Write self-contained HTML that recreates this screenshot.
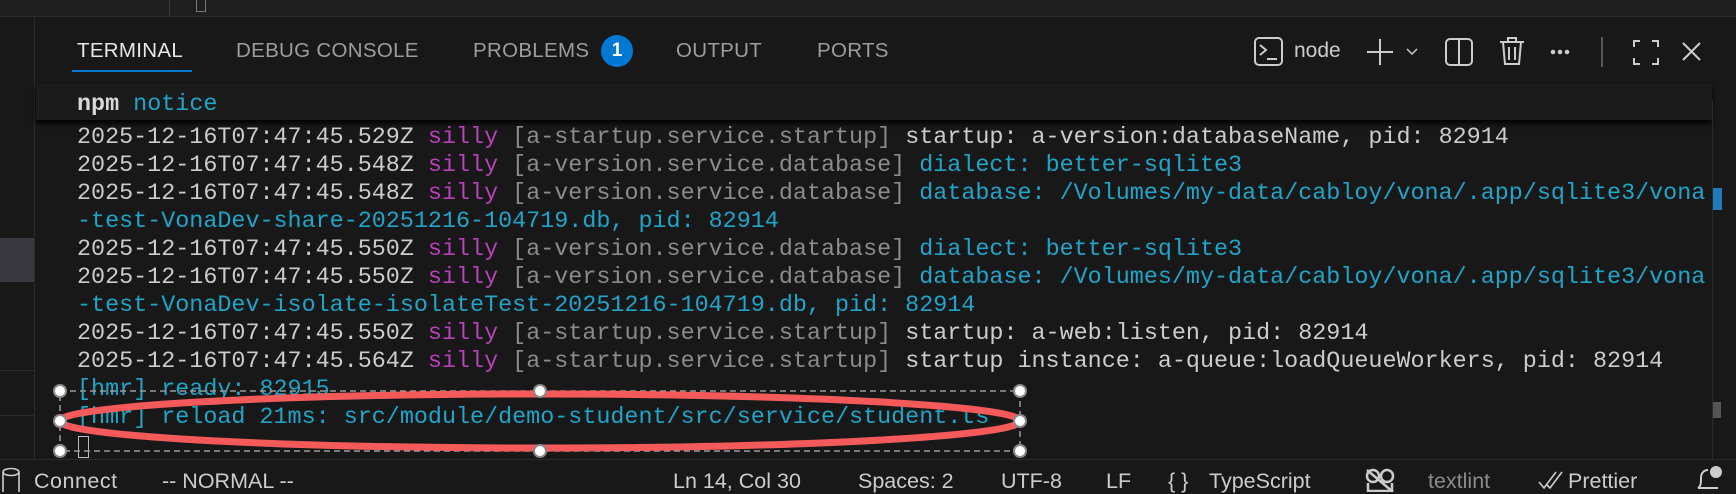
<!DOCTYPE html>
<html><head><meta charset="utf-8"><style>
*{margin:0;padding:0;box-sizing:border-box}
body{width:1736px;height:492px;overflow:hidden;background:#181818;position:relative;font-family:"Liberation Sans",sans-serif}
.a{position:absolute;white-space:pre}
.tab{position:absolute;top:39px;font-size:20.5px;color:#9d9d9d;letter-spacing:0.3px}
.mono{font-family:"Liberation Mono",monospace;font-size:23.4px;line-height:28px;color:#cccccc}
.m{color:#bc3fbc}.g{color:#8b8b8b}.c{color:#1ea5c9}
.st{position:absolute;top:469px;font-size:21.5px;color:#cccccc;white-space:pre}
</style></head><body>
<div class="a" style="left:0;top:0;width:1736px;height:17px;background:#1f1f1f;border-bottom:1px solid #2b2b2b"></div>
<div class="a" style="left:169px;top:0;width:1px;height:16px;background:#3a3a3a"></div>
<div class="a" style="left:196px;top:0;width:10px;height:12px;border:1px solid #777;border-top:none"></div>
<div class="a" style="left:0;top:17px;width:35px;height:442px;background:#181818;border-right:1px solid #2b2b2b"></div>
<div class="a" style="left:0;top:238px;width:34px;height:44px;background:#37373d"></div>
<div class="a" style="left:0;top:370px;width:34px;height:1px;background:#2b2b2b"></div>
<div class="a" style="left:0;top:415px;width:34px;height:1px;background:#2b2b2b"></div>
<div class="tab" style="left:77px;color:#e7e7e7">TERMINAL</div>
<div class="a" style="left:72px;top:70px;width:120px;height:2px;background:#0078d4"></div>
<div class="tab" style="left:236px">DEBUG CONSOLE</div>
<div class="tab" style="left:473px">PROBLEMS</div>
<div class="a" style="left:601px;top:35px;width:32px;height:32px;border-radius:50%;background:#0078d4;color:#fff;font-size:19px;text-align:center;line-height:32px;font-weight:bold">1</div>
<div class="tab" style="left:676px">OUTPUT</div>
<div class="tab" style="left:817px">PORTS</div>
<svg class="a" style="left:1250px;top:31px" width="480" height="42" viewBox="0 0 480 42" fill="none" stroke="#cccccc" stroke-width="2">
 <rect x="5" y="7" width="27" height="27" rx="4"/>
 <path d="M10 14l6 5-6 5M17 28h10"/>
 <path d="M130 8v26M117 21h26"/>
 <path d="M157 18l5 5 5-5" stroke-width="1.5"/>
 <rect x="196" y="8" width="26" height="26" rx="4"/><path d="M209 8v26"/>
 <path d="M250 11h24M258 11V7h8v4M253 11l2 22h14l2-22M259 16v13M265 16v13"/>
 <circle cx="303" cy="21" r="1.3" fill="#ccc"/><circle cx="310" cy="21" r="1.3" fill="#ccc"/><circle cx="317" cy="21" r="1.3" fill="#ccc"/>
 <path d="M352 6v30" stroke="#555"/>
 <path d="M384 16v-6h6M402 10h6v6M408 27v6h-6M390 33h-6v-6"/>
 <path d="M433 12l17 17M450 12l-17 17"/>
</svg>
<div class="a" style="left:1294px;top:39px;font-size:21px;color:#cccccc">node</div>
<div class="a" style="left:36px;top:84px;width:1676px;height:36px;background:#1b1b1b;box-shadow:0 3px 5px #000"></div>
<div class="a mono" style="left:77px;top:91px"><b style="color:#d8d8d8">npm</b> <span class="c">notice</span></div>
<div class="a" style="left:1712px;top:100px;width:1px;height:359px;background:#2b2b2b"></div>
<div class="a" style="left:1713px;top:188px;width:9px;height:22px;background:#1e7ab8"></div>
<div class="a" style="left:1713px;top:402px;width:8px;height:16px;background:#555"></div>
<div class="a mono" style="left:77px;top:124px">2025-12-16T07:47:45.529Z <span class="m">silly</span> <span class="g">[a-startup.service.startup]</span> startup: a-version:databaseName, pid: 82914
2025-12-16T07:47:45.548Z <span class="m">silly</span> <span class="g">[a-version.service.database]</span> <span class="c">dialect: better-sqlite3</span>
2025-12-16T07:47:45.548Z <span class="m">silly</span> <span class="g">[a-version.service.database]</span> <span class="c">database: /Volumes/my-data/cabloy/vona/.app/sqlite3/vona</span>
<span class="c">-test-VonaDev-share-20251216-104719.db, pid: 82914</span>
2025-12-16T07:47:45.550Z <span class="m">silly</span> <span class="g">[a-version.service.database]</span> <span class="c">dialect: better-sqlite3</span>
2025-12-16T07:47:45.550Z <span class="m">silly</span> <span class="g">[a-version.service.database]</span> <span class="c">database: /Volumes/my-data/cabloy/vona/.app/sqlite3/vona</span>
<span class="c">-test-VonaDev-isolate-isolateTest-20251216-104719.db, pid: 82914</span>
2025-12-16T07:47:45.550Z <span class="m">silly</span> <span class="g">[a-startup.service.startup]</span> startup: a-web:listen, pid: 82914
2025-12-16T07:47:45.564Z <span class="m">silly</span> <span class="g">[a-startup.service.startup]</span> startup instance: a-queue:loadQueueWorkers, pid: 82914
<span class="c">[hmr] ready: 82915</span>
<span class="c">[hmr] reload 21ms: src/module/demo-student/src/service/student.ts</span>
</div>
<div class="a" style="left:78px;top:436px;width:11px;height:22px;border:1.5px solid #bbb"></div>
<svg class="a" style="left:0;top:0" width="1736" height="492">
 <rect x="60" y="391" width="960" height="60" fill="none" stroke="#9a9a9a" stroke-width="1.5" stroke-dasharray="6 4"/>
 <ellipse cx="540" cy="421" rx="480" ry="27" fill="none" stroke="#f45a5a" stroke-width="7"/>
 <g fill="#fff" stroke="#8a8a8a" stroke-width="2">
  <circle cx="60" cy="391" r="6"/><circle cx="540" cy="391" r="6"/><circle cx="1020" cy="391" r="6"/>
  <circle cx="60" cy="421" r="6"/><circle cx="1020" cy="421" r="6"/>
  <circle cx="60" cy="451" r="6"/><circle cx="540" cy="451" r="6"/><circle cx="1020" cy="451" r="6"/>
 </g>
</svg>
<div class="a" style="left:0;top:459px;width:1736px;height:33px;background:#181818;border-top:1px solid #2b2b2b"></div>
<svg class="a" style="left:1px;top:467px" width="20" height="25" fill="none" stroke="#ccc" stroke-width="1.6"><ellipse cx="10" cy="5" rx="8" ry="3.5"/><path d="M2 5v20M18 5v20"/></svg>
<div class="st" style="left:34px;letter-spacing:0.5px">Connect</div>
<div class="st" style="left:162px">-- NORMAL --</div>
<div class="st" style="left:673px">Ln 14, Col 30</div>
<div class="st" style="left:858px">Spaces: 2</div>
<div class="st" style="left:1001px">UTF-8</div>
<div class="st" style="left:1106px">LF</div>
<div class="st" style="left:1168px">{ }</div>
<div class="st" style="left:1209px">TypeScript</div>
<svg class="a" style="left:1364px;top:467px" width="32" height="25" fill="none" stroke="#ccc" stroke-width="2.5"><circle cx="9" cy="9" r="6"/><circle cx="23" cy="9" r="6"/><path d="M4 16v8h24v-8M3 3l26 22"/></svg>
<div class="st" style="left:1428px;color:#8b8b8b">textlint</div>
<svg class="a" style="left:1538px;top:470px" width="26" height="20" fill="none" stroke="#ccc" stroke-width="1.6"><path d="M1 12l5 6L18 2M8 14l4 4L24 2"/></svg>
<div class="st" style="left:1568px">Prettier</div>
<svg class="a" style="left:1694px;top:466px" width="30" height="26" fill="none" stroke="#ccc" stroke-width="2"><path d="M4 22c3-2 3-5 3-10s3-8 7-8M4 22h20"/><circle cx="22" cy="6" r="5" fill="#ccc"/></svg>
</body></html>
